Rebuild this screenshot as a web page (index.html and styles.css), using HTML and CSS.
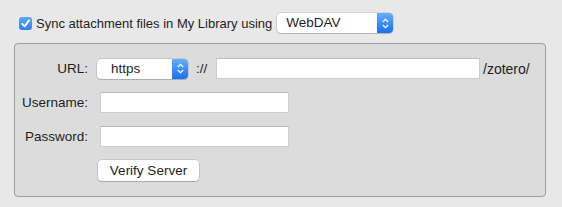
FILE: index.html
```html
<!DOCTYPE html>
<html lang="en">
<head>
    <meta charset="UTF-8">
    <title>Sync Settings</title>
    <link rel="stylesheet" href="styles.css">
</head>
<body>

<div class="pane">
    <div class="sync-row">
        <span class="checkbox">
            <svg width="13" height="13" viewBox="0 0 13 13"><path d="M3.2 6.8 L5.6 9.4 L10 3.4" fill="none" stroke="#fff" stroke-width="1.8" stroke-linecap="round" stroke-linejoin="round"/></svg>
        </span>
        <span class="sync-label">Sync attachment files in My Library using</span>
        <div class="select select-wide">
            <span class="select-text">WebDAV</span>
            <span class="select-arrow">
                <svg width="9" height="13" viewBox="0 0 9 13"><path d="M1.8 5 L4.5 2.4 L7.2 5 M1.8 8 L4.5 10.6 L7.2 8" fill="none" stroke="#fff" stroke-width="1.2"/></svg>
            </span>
        </div>
    </div>

    <div class="group">
        <div class="row">
            <label class="label">URL:</label>
            <div class="select select-scheme">
                <span class="select-text">https</span>
                <span class="select-arrow">
                    <svg width="9" height="13" viewBox="0 0 9 13"><path d="M1.8 5 L4.5 2.4 L7.2 5 M1.8 8 L4.5 10.6 L7.2 8" fill="none" stroke="#fff" stroke-width="1.2"/></svg>
                </span>
            </div>
            <span class="sep">://</span>
            <input type="text" class="field url-field">
            <span class="suffix">/zotero/</span>
        </div>

        <div class="row">
            <label class="label">Username:</label>
            <input type="text" class="field short-field">
        </div>

        <div class="row">
            <label class="label">Password:</label>
            <input type="password" class="field short-field">
        </div>

        <div class="row">
            <span class="label"></span>
            <button class="verify">Verify Server</button>
        </div>
    </div>
</div>

</body>
</html>
```

FILE: styles.css
```css
* {
    box-sizing: border-box;
    margin: 0;
    padding: 0;
}

body {
    font-family: 'Liberation Sans', Arial, sans-serif;
    font-size: 13px;
    color: #1e1e1e;
    background-color: #e8e8e8;
}

.pane {
    padding: 13px 16px 0 14px;
}

.sync-row {
    display: flex;
    align-items: center;
    height: 20px;
    padding-left: 5px;
}

.checkbox {
    width: 13px;
    height: 13px;
    border-radius: 3px;
    background: linear-gradient(#5ca6fb, #2b82f4);
    display: flex;
    align-items: center;
    justify-content: center;
}

.sync-label {
    margin-left: 4px;
    font-size: 13px;
}

.select {
    display: flex;
    align-items: stretch;
    height: 20px;
    background-color: #fff;
    border-radius: 4px;
    box-shadow: 0 0 0 0.5px rgba(0, 0, 0, 0.18), 0 1px 1px rgba(0, 0, 0, 0.15);
    overflow: hidden;
}

.select-wide {
    width: 116px;
    margin-left: 5px;
}

.select-scheme {
    width: 91px;
    margin-left: 9px;
}

.select-text {
    flex: 1;
    padding-left: 9px;
    line-height: 20px;
    font-size: 13.5px;
}

.select-scheme .select-text {
    padding-left: 14px;
}

.select-arrow {
    width: 16px;
    background: linear-gradient(#67aefc, #1a70ee);
    display: flex;
    align-items: center;
    justify-content: center;
}

.group {
    margin-top: 10px;
    height: 154px;
    background-color: #dcdcdc;
    border: 1px solid #9d9d9d;
    border-radius: 4px;
    padding-top: 14px;
}

.row {
    display: flex;
    align-items: center;
    height: 21px;
    margin-bottom: 13px;
}

.row:last-child {
    margin-bottom: 0;
}

.label {
    width: 73px;
    text-align: right;
    font-size: 13.5px;
}

.field {
    height: 21px;
    border: 1px solid #cdcdcd;
    border-top-color: #bdbdbd;
    background-color: #fff;
    font-family: inherit;
    font-size: 13px;
    outline: none;
}

.short-field {
    width: 189px;
    margin-left: 12px;
}

.sep {
    margin-left: 8px;
    width: 20px;
    font-size: 13.5px;
}

.url-field {
    width: 264px;
}

.suffix {
    margin-left: 3px;
    font-size: 14px;
}

.verify {
    margin-left: 10px;
    width: 101px;
    height: 21px;
    background-color: #fff;
    border: none;
    border-radius: 4px;
    box-shadow: 0 0 0 0.5px rgba(0, 0, 0, 0.2), 0 1px 1px rgba(0, 0, 0, 0.15);
    font-family: inherit;
    font-size: 13.5px;
    color: #1e1e1e;
}
```
